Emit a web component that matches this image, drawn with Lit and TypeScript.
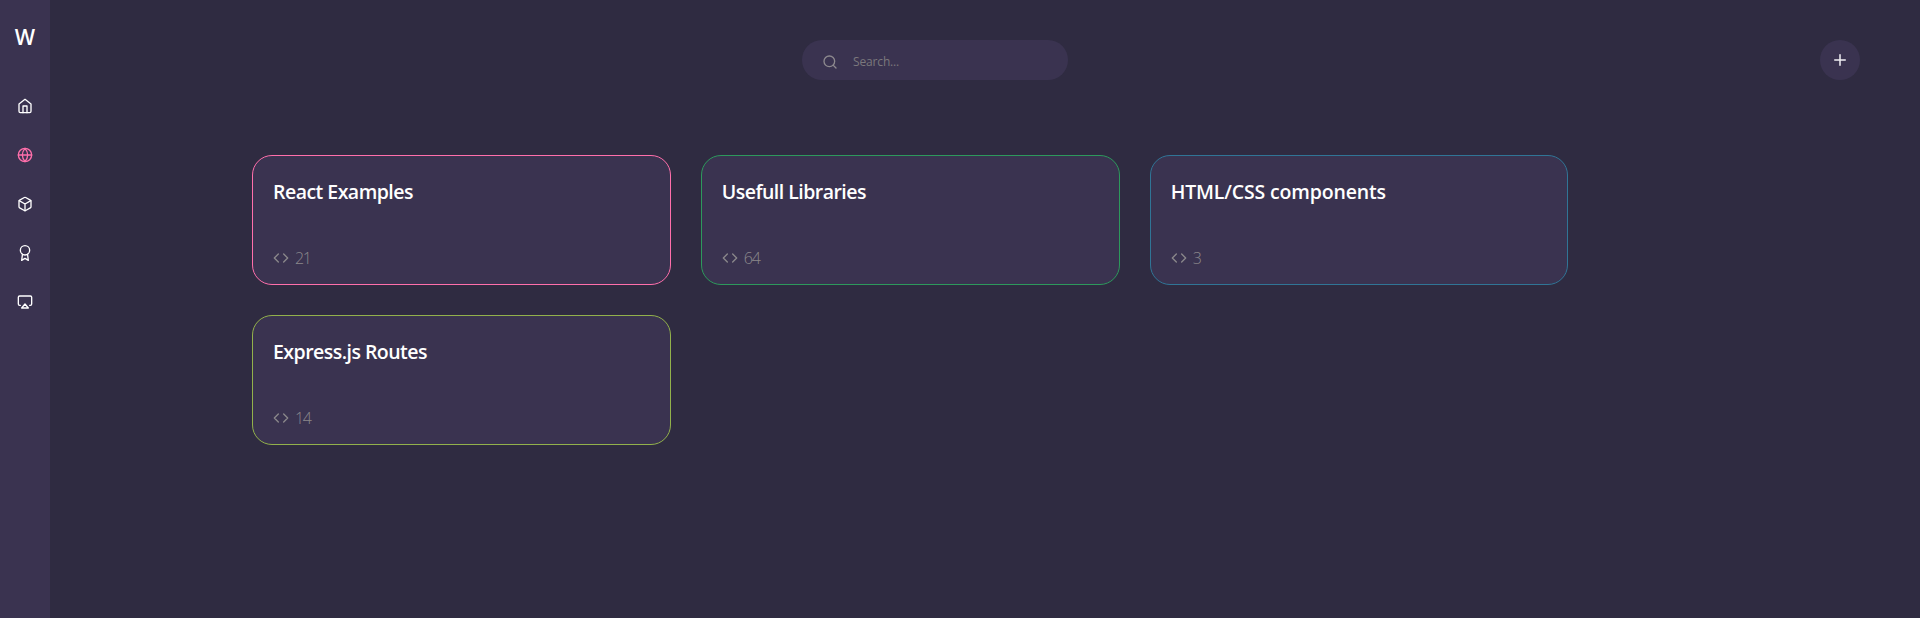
import { LitElement, html, css, svg } from "lit";
import { customElement, property } from "lit/decorators.js";
import { classMap } from "lit/directives/class-map.js";

const icons: Record<string, unknown> = {
  home: svg`<path d="M3 9l9-7 9 7v11a2 2 0 0 1-2 2H5a2 2 0 0 1-2-2z"/><path d="M9 22V12h6v10"/>`,
  globe: svg`<circle cx="12" cy="12" r="10"/><path d="M2 12h20"/><path d="M12 2a15.3 15.3 0 0 1 4 10 15.3 15.3 0 0 1-4 10 15.3 15.3 0 0 1-4-10 15.3 15.3 0 0 1 4-10z"/>`,
  box: svg`<path d="M21 16V8a2 2 0 0 0-1-1.73l-7-4a2 2 0 0 0-2 0l-7 4A2 2 0 0 0 3 8v8a2 2 0 0 0 1 1.73l7 4a2 2 0 0 0 2 0l7-4A2 2 0 0 0 21 16z"/><path d="M3.27 6.96L12 12.01l8.73-5.05M12 22.08V12"/>`,
  award: svg`<circle cx="12" cy="8" r="7"/><path d="M8.21 13.89L7 23l5-3 5 3-1.21-9.12"/>`,
  airplay: svg`<path d="M5 17H4a2 2 0 0 1-2-2V5a2 2 0 0 1 2-2h16a2 2 0 0 1 2 2v10a2 2 0 0 1-2 2h-1"/><path d="M12 15l5 6H7z"/>`,
  search: svg`<circle cx="11" cy="11" r="8"/><path d="M21 21l-4.35-4.35"/>`,
  plus: svg`<path d="M12 5v14M5 12h14"/>`,
  code: svg`<path d="M16 18l6-6-6-6M8 6l-6 6 6 6"/>`,
};

@customElement("ui-icon")
class UiIcon extends LitElement {
  @property() name = "";
  static styles = css`
    :host { display: block; width: 16px; height: 16px; flex: none; }
    svg {
      display: block; width: 100%; height: 100%; fill: none; stroke: currentColor;
      stroke-width: 2; stroke-linecap: round; stroke-linejoin: round; overflow: visible;
    }
  `;
  render() {
    return html`<svg viewBox="0 0 24 24">${icons[this.name]}</svg>`;
  }
}

@customElement("folder-card")
class FolderCard extends LitElement {
  @property() heading = "";
  @property({ type: Number }) count = 0;
  static styles = css`
    :host {
      box-sizing: border-box; height: 130px; padding: 21px 20px 15px;
      display: flex; flex-direction: column; justify-content: space-between;
      border: 1px solid; border-radius: 20px; background: #3a3350;
    }
    .title {
      margin: 0; color: #fff; font-size: 19.5px; line-height: 30px; font-weight: 600;
      letter-spacing: var(--title-spacing, -0.53px); white-space: nowrap;
    }
    .meta {
      display: flex; align-items: center; gap: 6px; color: #8b888b;
      font-size: 16px; line-height: 22px; font-weight: 300; letter-spacing: -1.3px;
    }
  `;
  render() {
    return html`
      <h2 class="title">${this.heading}</h2>
      <div class="meta"><ui-icon name="code"></ui-icon><span>${this.count}</span></div>
    `;
  }
}

@customElement("app-root")
class AppRoot extends LitElement {
  static styles = css`
    :host {
      display: flex; height: 618px; background: #2f2b41; color: #fff;
      font-family: "Open Sans", "Noto Sans", sans-serif;
    }
    .sidebar {
      width: 50px; box-sizing: border-box; flex: none; padding-top: 22px; background: #3a3350;
      display: flex; flex-direction: column; align-items: center;
    }
    .logo { font-size: 21.5px; line-height: 29px; font-weight: 600; }
    nav { margin-top: 47px; display: flex; flex-direction: column; gap: 33px; color: #fff; }
    .active { color: #ff6fab; }
    main { flex: 1; min-width: 0; padding-top: 40px; }
    header {
      display: grid; grid-template-columns: 736px 266px 1fr; align-items: center;
      padding: 0 60px 0 16px; height: 40px;
    }
    .search {
      grid-column: 2; box-sizing: border-box; height: 40px; padding: 3px 20px 0; border-radius: 20px;
      background: #3a3350; display: flex; align-items: center; gap: 15px; color: #8d898e;
    }
    .search input {
      flex: 1; min-width: 0; height: 18px; padding: 0; border: 0; outline: 0; background: none;
      font: 400 12px/18px "Open Sans", "Noto Sans", sans-serif; letter-spacing: -0.15px; color: #fff;
    }
    .search input::placeholder { color: #7b787c; opacity: 1; }
    .add {
      justify-self: end; width: 40px; height: 40px; padding: 0; border: 0; border-radius: 50%;
      background: #3a3350; color: #f1eff3; display: flex; align-items: center; justify-content: center;
    }
    .add ui-icon { width: 18px; height: 18px; }
    .cards {
      width: 1316.45px; margin: 75px 0 0 202px; display: grid;
      grid-template-columns: repeat(3, 1fr); gap: 30px;
    }
    .pink { border-color: #ff6fab; }
    .green { border-color: #2d995c; }
    .blue { border-color: #307596; --title-spacing: -0.15px; }
    .lime { border-color: #92b14b; }
  `;
  render() {
    const cards: [string, number, string][] = [
      ["React Examples", 21, "pink"],
      ["Usefull Libraries", 64, "green"],
      ["HTML/CSS components", 3, "blue"],
      ["Express.js Routes", 14, "lime"],
    ];
    return html`
      <aside class="sidebar">
        <div class="logo">W</div>
        <nav>
          ${["home", "globe", "box", "award", "airplay"].map(
            (n) => html`<ui-icon class=${classMap({ active: n === "globe" })} name=${n}></ui-icon>`
          )}
        </nav>
      </aside>
      <main>
        <header>
          <label class="search"><ui-icon name="search"></ui-icon><input placeholder="Search..." /></label>
          <button class="add" aria-label="Add"><ui-icon name="plus"></ui-icon></button>
        </header>
        <section class="cards">
          ${cards.map(([t, c, k]) => html`<folder-card class=${k} heading=${t} .count=${c}></folder-card>`)}
        </section>
      </main>
    `;
  }
}
